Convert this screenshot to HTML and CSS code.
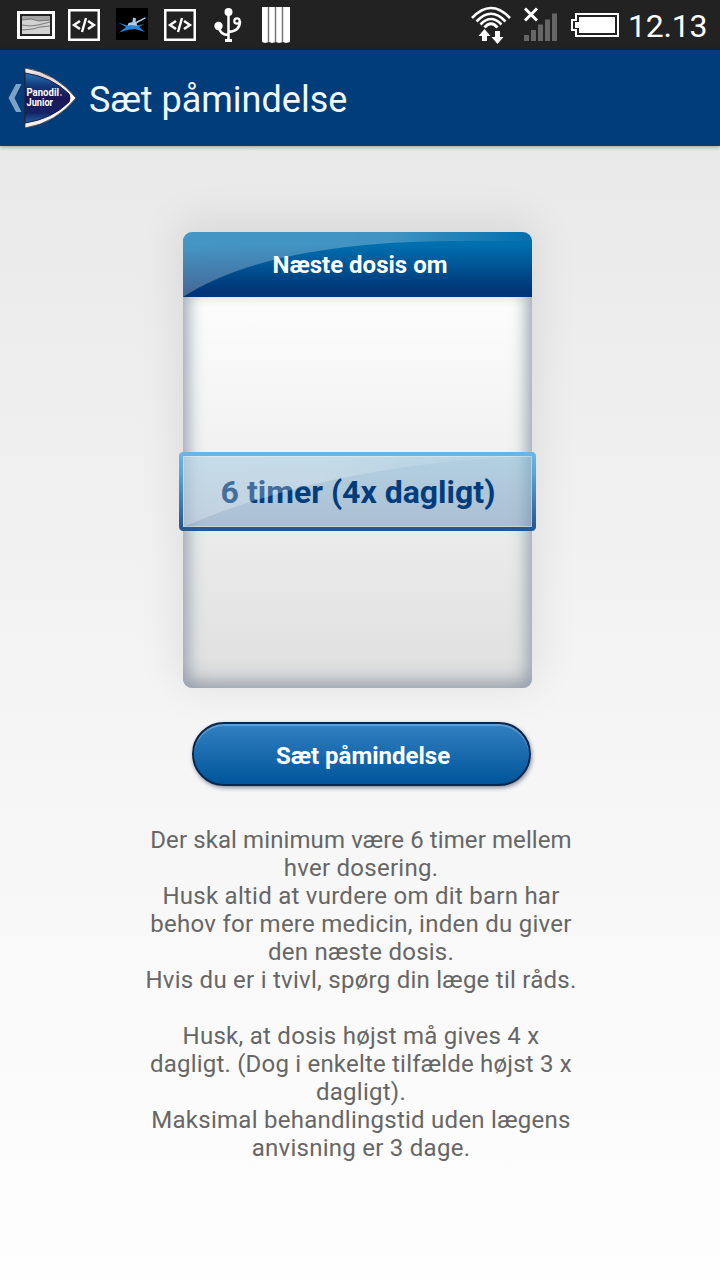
FILE: index.html
```html
<!DOCTYPE html>
<html lang="da">
<head>
  <meta charset="UTF-8" />
  <meta name="viewport" content="width=device-width, initial-scale=1.0" />
  <title>Sæt påmindelse</title>
  <link rel="stylesheet" href="styles.css">
</head>
<body>
  <div class="status-bar">
    <div class="notifications">
      <span class="slot">
        <svg width="38" height="28" viewBox="0 0 38 28">
          <rect width="38" height="28" fill="#fff"/>
          <rect x="3" y="3" width="32" height="22" fill="#222"/>
          <rect x="5" y="5" width="28" height="18" fill="#d2d2d2"/>
          <path d="M5 5h28v4l-10 1-8-2-10 1z" fill="#a4a4a4"/>
          <path d="M5 9l9-1 8 2 11-1M5 14l8 1 8-1 12-3M5 19l11-1 7-2 10-1" stroke="#777" fill="none"/>
        </svg>
      </span>
      <span class="slot">
        <svg width="32" height="32" viewBox="0 0 32 32">
          <rect x="1.25" y="1.25" width="29.5" height="29.5" fill="none" stroke="#fff" stroke-width="2.5"/>
          <path d="M12 12l-6 4 6 4M20 12l6 4-6 4M18 9l-4 14" fill="none" stroke="#fff" stroke-width="2.4"/>
        </svg>
      </span>
      <span class="slot">
        <svg class="app-icon" width="32" height="32" viewBox="0 0 32 32">
          <rect width="32" height="32" fill="#000"/>
          <path d="M2 14.500l9 3 5-1.500 5 1.500 7-1.500-5 3 6 5-10-3-8 1-8 2.500 7-5.500z" fill="#2785d8"/>
          <path d="M17 9.500l3 1-.5 3.500 10-5v1.500l-9 5 1 2.500-7-1-3 1 1-3 4-1z" fill="#a9cdea"/>
        </svg>
      </span>
      <span class="slot">
        <svg width="32" height="32" viewBox="0 0 32 32">
          <rect x="1.25" y="1.25" width="29.5" height="29.5" fill="none" stroke="#fff" stroke-width="2.5"/>
          <path d="M12 12l-6 4 6 4M20 12l6 4-6 4M18 9l-4 14" fill="none" stroke="#fff" stroke-width="2.4"/>
        </svg>
      </span>
      <span class="slot">
        <svg width="28" height="34" viewBox="0 0 28 34">
          <circle cx="14.5" cy="4" r="4" fill="#fff"/>
          <circle cx="4.5" cy="18" r="4.2" fill="#fff"/>
          <circle cx="23" cy="13" r="2.7" fill="none" stroke="#fff" stroke-width="2.2"/>
          <path d="M14.5 4v29M5 19q1 8 9.500 8M26 13q0 10-11 11" fill="none" stroke="#fff" stroke-width="2.500"/>
          <rect x="11" y="31" width="7" height="3" fill="#fff"/>
        </svg>
      </span>
      <span class="slot">
        <svg width="28" height="36" viewBox="0 0 28 36">
          <path d="M0 0h28v35l-4 1-3-1-4 1-3-1-4 1-3-1-4 1-3-1z" fill="#fff"/>
          <path d="M6.500 0v35M13.500 0v35M20.500 0v35" stroke="#777" stroke-width="1.500"/>
        </svg>
      </span>
    </div>
    <div class="system">
      <svg width="40" height="39" viewBox="0 0 40 39">
        <g fill="none" stroke="#fff" stroke-width="2.700">
          <path d="M1 12Q20-8 39 12"/>
          <path d="M5.500 15.500Q20 0 34.500 15.500"/>
          <path d="M9.500 18.500Q20 7.500 30.500 18.500"/>
          <path d="M13.500 21.500Q20 14 26.500 21.500" stroke-width="3"/>
        </g>
        <path d="M13.500 23l6 7h-3.500v5h-5v-5h-3.500zM24 25h5v6h3.500l-6 7-6-7h3.500z" fill="#fff"/>
      </svg>
      <svg class="signal" width="34" height="34" viewBox="0 0 34 34">
        <path d="M1 28h5v6h-5zM8 23h5v11h-5zM15 17.500h5v16.500h-5zM22 12.500h5v21.500h-5zM29 6.500h5v27.500h-5z" fill="#666"/>
        <path d="M2 1.500l12 12M14 1.500l-12 12" stroke="#fff" stroke-width="3"/>
      </svg>
      <svg class="battery" width="48" height="24" viewBox="0 0 48 24">
        <path d="M5 1h42v22h-42v-6h-4v-10h4z" fill="none" stroke="#fff" stroke-width="2"/>
        <path d="M8 4h36v16h-36v-5h-4v-6h4z" fill="#fff"/>
      </svg>
      <span class="clock">12.13</span>
    </div>
  </div>

  <header class="app-bar">
    <svg class="back" width="14" height="28" viewBox="0 0 14 28">
      <path d="M8 0h5.500l-7 14 7 14h-5.500l-7.500-14z" fill="#7da2c6"/>
    </svg>
    <svg class="logo" width="53" height="62" viewBox="0 0 53 62">
      <defs>
        <linearGradient id="silver" x1="0" y1="0" x2="0" y2="1">
          <stop offset="0" stop-color="#fff"/>
          <stop offset=".12" stop-color="#ddd5d2"/>
          <stop offset=".5" stop-color="#fff"/>
          <stop offset="1" stop-color="#eee"/>
        </linearGradient>
        <linearGradient id="navy" x1="0" y1="0" x2="0" y2="1">
          <stop offset="0" stop-color="#2b78b8"/>
          <stop offset=".25" stop-color="#123a7c"/>
          <stop offset=".5" stop-color="#1e1456"/>
          <stop offset=".8" stop-color="#152467"/>
          <stop offset="1" stop-color="#2064a2"/>
        </linearGradient>
      </defs>
      <path d="M1 1Q32 6 52 31Q32 56 1 61z" fill="url(#silver)" stroke="#45362f" stroke-width=".8"/>
      <path d="M1 6Q28 10 45 27Q47 31 45 35Q28 52 1 56z" fill="url(#navy)" stroke="#1d1c3c"/>
      <text class="logo-text" x="2.500" y="28.500" textLength="32.500" lengthAdjust="spacingAndGlyphs">Panodil</text>
      <text class="logo-text" x="2.500" y="39" textLength="26.500" lengthAdjust="spacingAndGlyphs">Junior</text>
      <circle cx="37" cy="28" r=".8" fill="#fff"/>
    </svg>
    <h1>Sæt påmindelse</h1>
  </header>

  <main>
    <section class="picker">
      <h2 class="picker-title">
        <svg class="gloss" width="349" height="65" viewBox="0 0 349 65">
          <defs>
            <linearGradient id="shine" x1="0" y1="0" x2="1" y2="0">
              <stop offset="0" stop-color="#fff" stop-opacity=".27"/>
              <stop offset=".6" stop-color="#fff" stop-opacity=".25"/>
              <stop offset="1" stop-color="#fff" stop-opacity="0"/>
            </linearGradient>
          </defs>
          <path d="M0 0H349V9H290Q90 7 0 65z" fill="url(#shine)"/>
        </svg>
        <span>Næste dosis om</span>
      </h2>
      <div class="wheel"></div>
      <div class="selected">
        <span>6 timer (4x dagligt)</span>
        <svg class="gloss" width="357" height="79" viewBox="0 0 357 79">
          <defs>
            <linearGradient id="frame" gradientUnits="userSpaceOnUse" x1="0" y1="0" x2="0" y2="79">
              <stop offset=".05" stop-color="#68b4e3"/>
              <stop offset=".25" stop-color="#5ba6d9"/>
              <stop offset=".95" stop-color="#235a93"/>
            </linearGradient>
            <linearGradient id="sheen" x1="0" y1="0" x2="1" y2="0">
              <stop offset="0" stop-color="#fff" stop-opacity=".26"/>
              <stop offset=".4" stop-color="#fff" stop-opacity=".25"/>
              <stop offset="1" stop-color="#fff" stop-opacity="0"/>
            </linearGradient>
          </defs>
          <path d="M4 4H353Q150 12 4 75z" fill="url(#sheen)"/>
          <rect x="4.500" y="4.500" width="348" height="70" fill="none" stroke="#fff" stroke-opacity=".35"/>
          <rect x="2" y="2" width="353" height="75" rx="2.500" fill="none" stroke="url(#frame)" stroke-width="4"/>
        </svg>
      </div>
    </section>

    <button class="set-button">Sæt påmindelse</button>

    <div class="info">
      <p>
        <span class="tight">Der skal minimum være 6 timer mellem</span><br>
        hver dosering.<br>
        Husk altid at vurdere om dit barn har<br>
        behov for mere medicin, inden du giver<br>
        den næste dosis.<br>
        Hvis du er i tvivl, spørg din læge til råds.
      </p>
      <p>
        Husk, at dosis højst må gives 4 x<br>
        <span class="snug">dagligt. (Dog i enkelte tilfælde højst 3 x</span><br>
        dagligt).<br>
        Maksimal behandlingstid uden lægens<br>
        anvisning er 3 dage.
      </p>
    </div>
  </main>
</body>
</html>
```
FILE: styles.css
```css
* {
  box-sizing: border-box;
}

body {
  margin: 0;
  height: 1280px;
  overflow: hidden;
  font-family: Roboto, sans-serif;
  background: linear-gradient(#e9e9e9 146px, #f4f4f4 680px, #fefefe 1280px);
}

svg {
  display: block;
  flex: none;
}

.status-bar {
  height: 50px;
  background: #222;
  display: flex;
  justify-content: space-between;
  padding: 0 12px;
}

.notifications,
.system {
  display: flex;
  align-items: center;
}

.slot {
  width: 48px;
  display: flex;
  justify-content: center;
}

.app-icon {
  margin-bottom: 2px;
}

.signal {
  margin: 0 14px 3px 12px;
}

.clock {
  width: 80px;
  margin-left: 9px;
  padding-top: 2px;
  color: #fff;
  font-size: 32px;
  letter-spacing: -0.2px;
  line-height: 50px;
  white-space: nowrap;
}

.app-bar {
  height: 96px;
  display: flex;
  align-items: center;
  padding-left: 8px;
  background: #003d7a;
  box-shadow: 0 1px 4px rgba(0,0,0,0.35);
}

.logo {
  margin-left: 2px;
}

.logo-text {
  font-size: 10px;
  font-weight: bold;
  fill: #fff;
}

h1 {
  margin: 3px 0 0 12px;
  font-size: 36px;
  font-weight: 400;
  color: #f0f7ff;
  white-space: nowrap;
}

main {
  display: flex;
  flex-direction: column;
  align-items: center;
  padding-top: 86px;
}

.picker {
  position: relative;
  width: 349px;
  margin-right: 5px;
  border-radius: 9px;
  box-shadow: 0 -6px 44px 4px rgba(0,0,0,0.085);
}

.picker-title {
  position: relative;
  height: 65px;
  margin: 0;
  border-radius: 9px 9px 0 0;
  overflow: hidden;
  background: linear-gradient(#006fae 20%, #003677 90%);
  color: #fff;
  font-size: 24px;
  font-weight: 700;
  line-height: 67px;
  text-align: center;
}

.picker-title span {
  position: relative;
  margin-left: 5px;
}

.gloss {
  position: absolute;
  top: 0;
  left: 0;
}

.wheel {
  height: 391px;
  border-radius: 0 0 9px 9px;
  background: linear-gradient(#fdfdfd, #dfdfdf);
  box-shadow: inset 14px 0 18px -10px #98a3b1, inset -14px 0 18px -10px #98a3b1, inset 0 -14px 20px -8px #98a0aa;
}

.selected {
  position: absolute;
  top: 220px;
  left: -4px;
  width: 357px;
  height: 79px;
  border-radius: 4px;
  background: linear-gradient(rgba(126,184,213,0.55), rgba(110,145,183,0.5));
  color: #003d7c;
  font-size: 32px;
  font-weight: 700;
  line-height: 81px;
  text-align: center;
  white-space: nowrap;
}

.selected span {
  margin-left: 1px;
}

.set-button {
  width: 339px;
  height: 64px;
  margin: 34px 0 0 2px;
  padding: 4px 0 0 4px;
  border: 2px solid #07264a;
  border-radius: 32px;
  background: linear-gradient(#3280c1, #00559a);
  box-shadow: 1px 2px 4px rgba(0,20,50,0.45), inset 0 2px 1px rgba(255,255,255,0.25);
  color: #fff;
  font-family: inherit;
  font-size: 24px;
  font-weight: 700;
}

.info {
  margin: 40px 0 0 2px;
  color: #666;
  font-size: 24px;
  letter-spacing: 0.26px;
  line-height: 28px;
  text-align: center;
  white-space: nowrap;
}

.info p {
  margin: 0 0 28px;
}

.tight {
  letter-spacing: 0.1px;
}

.snug {
  letter-spacing: 0.2px;
}
```
